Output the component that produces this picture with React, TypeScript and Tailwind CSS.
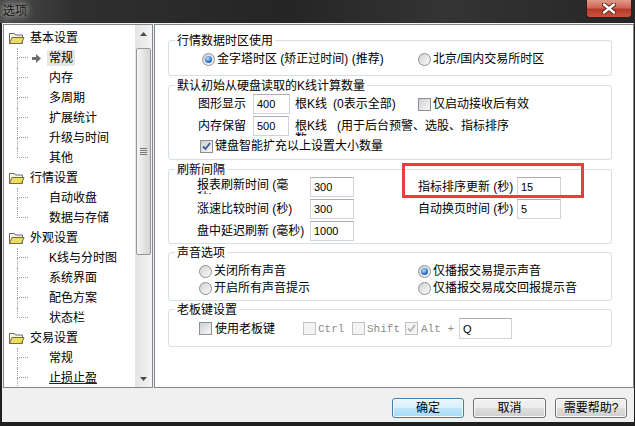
import clsx from "clsx";
import type { ReactNode } from "react";

const tree = [
  { title: "基本设置", items: ["常规", "内存", "多周期", "扩展统计", "升级与时间", "其他"] },
  { title: "行情设置", items: ["自动收盘", "数据与存储"] },
  { title: "外观设置", items: ["K线与分时图", "系统界面", "配色方案", "状态栏"] },
  { title: "交易设置", items: ["常规", "止损止盈", "快捷交易", "其他"] },
];

const Folder = () => (
  <svg width="17" height="14" viewBox="0 0 17 14">
    <path d="M1.5 2.5h5l1 1.5h7v8.5h-13z" fill="#f6f3df" stroke="#6a6a6a" />
    <path d="M1.5 12.5l2.5-6h12l-2.5 6z" fill="#efdc5c" stroke="#6a6a6a" strokeLinejoin="round" />
  </svg>
);

const Arrow = () => (
  <svg width="9" height="9" viewBox="0 0 9 9">
    <path d="M0 3h4V0l5 4.5L4 9V6H0z" fill="#6e6e6e" />
  </svg>
);

const Tri = ({ down }: { down?: boolean }) => (
  <svg width="7" height="4" viewBox="0 0 7 4">
    <path d={down ? "M0 0h7L3.5 4z" : "M0 4h7L3.5 0z"} fill="#4a4a4a" />
  </svg>
);

const Radio = ({ checked }: { checked?: boolean }) => (
  <span className="flex h-[13px] w-[13px] shrink-0 items-center justify-center rounded-full border border-[#8e8f8f] bg-[linear-gradient(135deg,#cfd1d4,#fbfbfb)]">
    {checked && (
      <span className="h-[7px] w-[7px] rounded-full bg-[radial-gradient(circle_at_40%_35%,#b6e4ff,#2a6fc9_60%,#15438a)]" />
    )}
  </span>
);

const Check = ({ checked, disabled }: { checked?: boolean; disabled?: boolean }) => (
  <span
    className={clsx(
      "flex h-[13px] w-[13px] shrink-0 items-center justify-center border",
      disabled ? "border-[#c2c2c2] bg-[#f4f4f4]" : "border-[#8e8f8f] bg-[linear-gradient(135deg,#cdd0d5,#f8f8f8)]"
    )}
  >
    {checked && (
      <svg width="11" height="11" viewBox="0 0 11 11">
        <path d="M2 5.5L4.5 8L9 2" stroke={disabled ? "#b4b4b4" : "#3f5a98"} strokeWidth="1.8" fill="none" />
      </svg>
    )}
  </span>
);

const Field = ({ value, className }: { value: string; className: string }) => (
  <span
    className={clsx(
      "flex h-[20px] shrink-0 items-center border border-[#cfd4db] border-t-[#abadb3] bg-white pl-[3px] font-['Liberation_Sans'] text-[11px]",
      className
    )}
  >
    {value}
  </span>
);

const Group = ({ title, className, children }: { title: string; className?: string; children: ReactNode }) => (
  <fieldset className={clsx("ml-[13px] w-[444px] rounded-[3px] border border-[#d5dfe5]", className)}>
    <legend className="ml-[6px] px-[2px] pt-[3px] leading-[13px]">{title}</legend>
    {children}
  </fieldset>
);

const Button = ({ label, primary, className }: { label: string; primary?: boolean; className: string }) => (
  <button
    className={clsx(
      "h-[20px] rounded-[3px] border text-[12px] leading-[16px] shadow-[inset_0_0_0_1px_#fcfcfc]",
      primary
        ? "border-[#3c7fb1] bg-[linear-gradient(#eaf6fd_0%,#d9f0fc_50%,#bee6fd_51%,#a7d9f5_100%)]"
        : "border-[#707070] bg-[linear-gradient(#f2f2f2_0%,#ebebeb_50%,#dddddd_51%,#cfcfcf_100%)]",
      className
    )}
  >
    {label}
  </button>
);

export default function App() {
  return (
    <div className="flex h-[426px] w-[635px] flex-col overflow-hidden bg-[#1f1f1f] font-['Liberation_Sans','Noto_Sans_CJK_SC',sans-serif] text-[12px] text-black">
      {/* title bar */}
      <div className="flex h-[23px] items-start justify-between bg-[linear-gradient(90deg,#4b4b4b_0%,#2f2f2f_12%,#252525_45%,#343434_70%,#262626_100%)]">
        <span className="pl-[3px] pt-[4px] leading-[15px] text-[#151515] [text-shadow:0_0_6px_#d8d8d8,0_0_10px_#bdbdbd]">选项</span>
        <span className="mr-[3px] flex h-[18px] w-[46px] items-center justify-center rounded-b-[4px] border border-t-0 border-[#3a1c18] bg-[linear-gradient(#e19a8c_0%,#cf6656_45%,#b83a29_55%,#c9543f_100%)]">
          <svg width="14" height="11" viewBox="0 0 14 11">
            <path d="M2 1.5L12 9.5M12 1.5L2 9.5" stroke="#4a2520" strokeWidth="4.2" strokeLinecap="round" />
            <path d="M2 1.5L12 9.5M12 1.5L2 9.5" stroke="#ffffff" strokeWidth="2.4" strokeLinecap="round" />
          </svg>
        </span>
      </div>

      {/* body */}
      <div className="ml-[2px] flex h-[399px] w-[632px] flex-col bg-[#f0f0f0] pt-[1px]">
        <div className="flex h-[364px] gap-[1px] pl-[1px]">
          {/* tree */}
          <div className="flex w-[150px] border border-[#828790] bg-white">
            <div className="flex-1 overflow-hidden pt-[3px]">
              {tree.map((g) => (
                <div key={g.title}>
                  <div className="flex h-[20px] items-center gap-[5px] pl-[4px] leading-[20px]">
                    <Folder />
                    <span>{g.title}</span>
                  </div>
                  {g.items.map((item, i) => {
                    const selected = g.title === "基本设置" && item === "常规";
                    const last = i === g.items.length - 1;
                    return (
                      <div key={item + i} className="flex h-[20px] items-stretch">
                        <span className="w-[13px] shrink-0" />
                        <span className="flex w-[11px] shrink-0 flex-col">
                          <span className="h-[10px] border-b border-l border-dotted border-[#a0a0a0]" />
                          <span className={clsx("h-[10px]", !last && "border-l border-dotted border-[#a0a0a0]")} />
                        </span>
                        <span className="flex w-[19px] shrink-0 items-center pl-[4px]">{selected && <Arrow />}</span>
                        <span
                          className={clsx(
                            "self-center whitespace-nowrap px-[2px] leading-[16px]",
                            selected && "bg-[#e6e6e6]",
                            item === "止损止盈" && "underline decoration-[#222]"
                          )}
                        >
                          {item}
                        </span>
                      </div>
                    );
                  })}
                </div>
              ))}
            </div>
            {/* scrollbar */}
            <div className="flex w-[17px] flex-col bg-[linear-gradient(90deg,#e4e4e4,#f4f4f4)]">
              <div className="flex h-[17px] items-center justify-center">
                <Tri />
              </div>
              <div className="mx-[1px] mt-[6px] flex h-[207px] flex-col items-center justify-center gap-[1px] rounded-[2px] border border-[#979797] bg-[linear-gradient(90deg,#f4f4f4,#e4e4e4_50%,#d5d5d5)]">
                <span className="h-[1px] w-[7px] bg-[#777]" />
                <span className="h-[1px] w-[7px] bg-[#777]" />
                <span className="h-[1px] w-[7px] bg-[#777]" />
                <span className="h-[1px] w-[7px] bg-[#777]" />
              </div>
              <div className="flex-1" />
              <div className="flex h-[17px] items-center justify-center">
                <Tri down />
              </div>
            </div>
          </div>

          {/* settings panel */}
          <div className="relative w-[480px] border border-[#828790] bg-white pt-[7px]">
            <Group title="行情数据时区使用">
              <div className="pb-[9px] pl-[33px] pt-[4px]">
                <div className="flex h-[14px] items-center leading-[16px]">
                  <span className="flex w-[216px] items-center gap-[2px]">
                    <Radio checked />
                    <span>金字塔时区 (矫正过时间) (推荐)</span>
                  </span>
                  <span className="flex items-center gap-[2px]">
                    <Radio />
                    <span>北京/国内交易所时区</span>
                  </span>
                </div>
              </div>
            </Group>

            <Group title="默认初始从硬盘读取的K线计算数量" className="mt-[1px]">
              <div className="flex flex-col gap-[2px] pb-[5px] pt-[1px]">
                <div className="flex h-[20px] items-center pl-[29px] leading-[16px]">
                  <span className="w-[55px]">图形显示</span>
                  <Field value="400" className="w-[37px]" />
                  <span className="ml-[5px] flex w-[123px] gap-[6px]">
                    <span>根K线</span>
                    <span>(0表示全部)</span>
                  </span>
                  <span className="flex items-center gap-[2px]">
                    <Check />
                    <span>仅启动接收后有效</span>
                  </span>
                </div>
                <div className="flex h-[20px] items-center pl-[29px] leading-[16px]">
                  <span className="w-[55px]">内存保留</span>
                  <Field value="500" className="w-[36px]" />
                  <span className="ml-[6px] h-[20px] w-[38px] overflow-hidden pt-[4px] leading-[13px]">根K线数</span>
                  <span className="ml-[4px]">(用于后台预警、选股、指标排序</span>
                </div>
                <div className="flex h-[16px] items-center gap-[2px] pl-[31px] leading-[16px]">
                  <Check checked />
                  <span>键盘智能扩充以上设置大小数量</span>
                </div>
              </div>
            </Group>

            <Group title="刷新间隔" className="mt-[1px]">
              <div className="flex flex-col gap-[2px] pb-[2px] pl-[28px]">
                <div className="flex h-[20px] items-start leading-[16px]">
                  <span className="w-[113px]">
                    <span className="block h-[17px] w-[94px] overflow-hidden pt-[2px] leading-[13px]">报表刷新时间 (毫秒)</span>
                  </span>
                  <Field value="300" className="w-[44px]" />
                  <span className="ml-[64px] w-[99px] self-center">指标排序更新 (秒)</span>
                  <Field value="15" className="w-[44px]" />
                </div>
                <div className="flex h-[20px] items-center leading-[16px]">
                  <span className="w-[113px]">涨速比较时间 (秒)</span>
                  <Field value="300" className="w-[44px]" />
                  <span className="ml-[64px] w-[99px]">自动换页时间 (秒)</span>
                  <Field value="5" className="w-[44px]" />
                </div>
                <div className="flex h-[20px] items-center leading-[16px]">
                  <span className="w-[113px]">盘中延迟刷新 (毫秒)</span>
                  <Field value="1000" className="w-[44px]" />
                </div>
              </div>
            </Group>

            <Group title="声音选项">
              <div className="flex flex-col gap-[1px] pb-[4px] pl-[30px] pt-[3px]">
                <div className="flex h-[16px] items-center leading-[16px]">
                  <span className="flex w-[219px] items-center gap-[2px]">
                    <Radio />
                    <span>关闭所有声音</span>
                  </span>
                  <span className="flex items-center gap-[2px]">
                    <Radio checked />
                    <span>仅播报交易提示声音</span>
                  </span>
                </div>
                <div className="flex h-[16px] items-center leading-[16px]">
                  <span className="flex w-[219px] items-center gap-[2px]">
                    <Radio />
                    <span>开启所有声音提示</span>
                  </span>
                  <span className="flex items-center gap-[2px]">
                    <Radio />
                    <span>仅播报交易成交回报提示音</span>
                  </span>
                </div>
              </div>
            </Group>

            <Group title="老板键设置">
              <div className="pb-[7px] pl-[30px] pt-[1px]">
                <div className="flex h-[21px] items-center leading-[16px]">
                  <span className="flex w-[104px] items-center gap-[3px]">
                    <Check />
                    <span>使用老板键</span>
                  </span>
                  <span className="flex w-[49px] items-center gap-[2px] font-['Liberation_Mono'] text-[11px] text-[#8c8c8c]">
                    <Check disabled />
                    <span>Ctrl</span>
                  </span>
                  <span className="flex w-[53px] items-center gap-[2px] font-['Liberation_Mono'] text-[11px] text-[#8c8c8c]">
                    <Check disabled />
                    <span>Shift</span>
                  </span>
                  <span className="flex w-[54px] items-center gap-[3px] font-['Liberation_Mono'] text-[11px] text-[#8c8c8c]">
                    <Check checked disabled />
                    <span className="whitespace-pre">Alt +</span>
                  </span>
                  <Field value="Q" className="h-[21px] w-[53px] font-['Liberation_Mono']" />
                </div>
              </div>
            </Group>

            {/* red highlight annotation */}
            <div className="absolute left-[247px] top-[138px] h-[35px] w-[182px] border-[3px] border-[#ef3b3b]" />
          </div>
        </div>

        {/* footer buttons */}
        <div className="flex justify-end gap-[9px] pr-[7px] pt-[10px]">
          <Button label="确定" primary className="w-[72px]" />
          <Button label="取消" className="w-[73px]" />
          <Button label="需要帮助?" className="w-[72px]" />
        </div>
      </div>
    </div>
  );
}
